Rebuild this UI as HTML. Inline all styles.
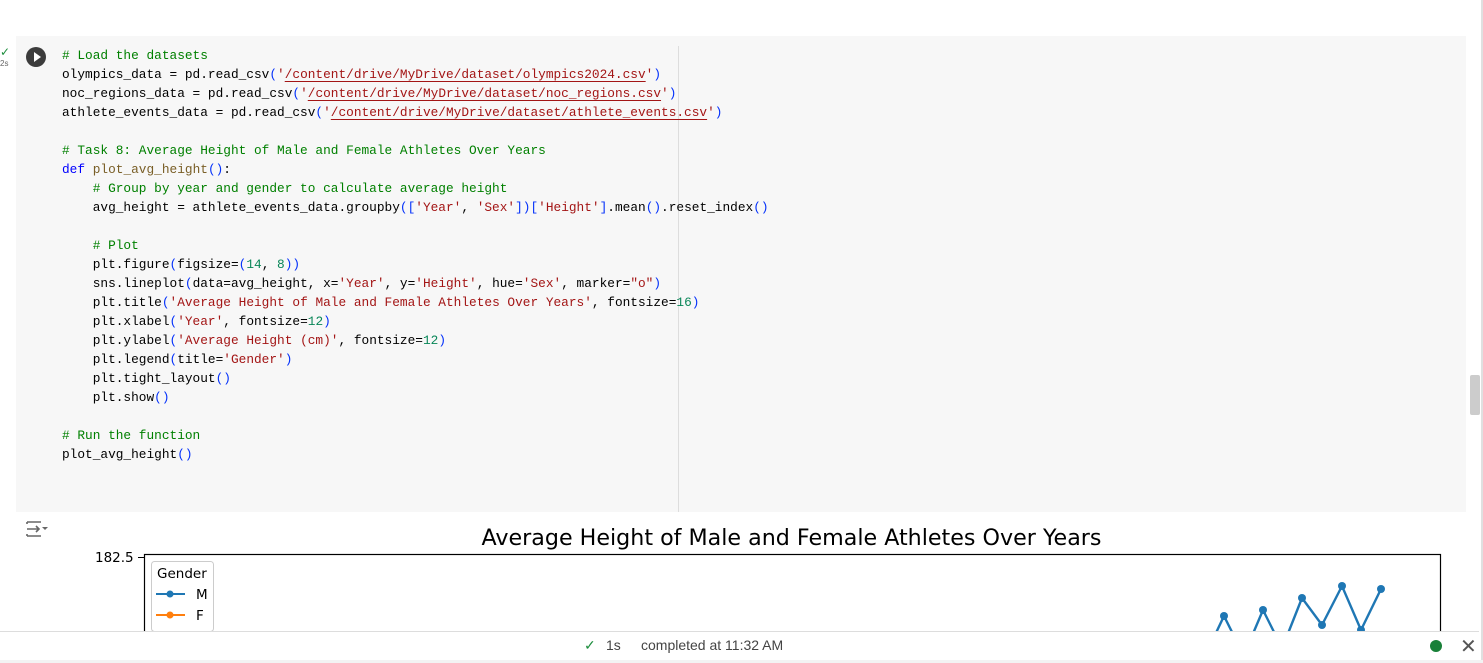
<!DOCTYPE html>
<html><head><meta charset="utf-8"><style>
body{margin:0;width:1483px;height:663px;overflow:hidden;background:#fff;font-family:"Liberation Sans",sans-serif;position:relative}
.cell{position:absolute;left:16px;top:36px;width:1450px;height:476px;background:#f7f7f7}
.vl{position:absolute;left:678px;top:46px;width:1px;height:466px;background:#ddd}
pre{position:absolute;left:62px;top:46px;margin:0;font-family:"Liberation Mono",monospace;font-size:12.8px;line-height:19px;color:#000}
.c{color:#008000}.k{color:#0000ff}.f{color:#795e26}.s{color:#a31515}.n{color:#098658}.b{color:#0431fa}
.u{text-decoration:underline;text-decoration-color:#a31515;text-underline-offset:3px}
.run{position:absolute;left:26px;top:47px;width:20px;height:20px;border-radius:50%;background:#3c3c3c}
.run:after{content:"";position:absolute;left:8px;top:5px;border-left:7px solid #fff;border-top:5px solid transparent;border-bottom:5px solid transparent}
.sb{position:absolute;left:1470px;top:375px;width:10px;height:40px;background:#ccc;border-radius:2px}
.status{position:absolute;left:0;top:631px;width:1479px;height:28px;border-top:1px solid #ddd;border-bottom:1px solid #ddd;background:#fff;font-size:14px;color:#444;z-index:5}
.bot{position:absolute;left:0;top:660px;width:1483px;height:3px;background:#f3f3f3;z-index:5}
</style></head><body>
<div style="position:absolute;left:1481px;top:0;width:2px;height:663px;background:#e0e0e0"></div>
<div style="position:absolute;left:0;top:45px;color:#1e8e3e;font-size:12px">✓</div>
<div style="position:absolute;left:0;top:59px;color:#666;font-size:8px">2s</div>
<div class="cell"></div><div class="vl"></div>
<div class="run"></div>
<pre><span class="c"># Load the datasets</span>
olympics_data = pd.read_csv<span class="b">(</span><span class="s">'<span class="u">/content/drive/MyDrive/dataset/olympics2024.csv</span>'</span><span class="b">)</span>
noc_regions_data = pd.read_csv<span class="b">(</span><span class="s">'<span class="u">/content/drive/MyDrive/dataset/noc_regions.csv</span>'</span><span class="b">)</span>
athlete_events_data = pd.read_csv<span class="b">(</span><span class="s">'<span class="u">/content/drive/MyDrive/dataset/athlete_events.csv</span>'</span><span class="b">)</span>

<span class="c"># Task 8: Average Height of Male and Female Athletes Over Years</span>
<span class="k">def</span> <span class="f">plot_avg_height</span><span class="b">()</span>:
    <span class="c"># Group by year and gender to calculate average height</span>
    avg_height = athlete_events_data.groupby<span class="b">([</span><span class="s">'Year'</span>, <span class="s">'Sex'</span><span class="b">])[</span><span class="s">'Height'</span><span class="b">]</span>.mean<span class="b">()</span>.reset_index<span class="b">()</span>

    <span class="c"># Plot</span>
    plt.figure<span class="b">(</span>figsize=<span class="b">(</span><span class="n">14</span>, <span class="n">8</span><span class="b">))</span>
    sns.lineplot<span class="b">(</span>data=avg_height, x=<span class="s">'Year'</span>, y=<span class="s">'Height'</span>, hue=<span class="s">'Sex'</span>, marker=<span class="s">"o"</span><span class="b">)</span>
    plt.title<span class="b">(</span><span class="s">'Average Height of Male and Female Athletes Over Years'</span>, fontsize=<span class="n">16</span><span class="b">)</span>
    plt.xlabel<span class="b">(</span><span class="s">'Year'</span>, fontsize=<span class="n">12</span><span class="b">)</span>
    plt.ylabel<span class="b">(</span><span class="s">'Average Height (cm)'</span>, fontsize=<span class="n">12</span><span class="b">)</span>
    plt.legend<span class="b">(</span>title=<span class="s">'Gender'</span><span class="b">)</span>
    plt.tight_layout<span class="b">()</span>
    plt.show<span class="b">()</span>

<span class="c"># Run the function</span>
plot_avg_height<span class="b">()</span></pre>
<div class="sb"></div>
<svg style="position:absolute;left:24px;top:519px" width="26" height="20" viewBox="0 0 26 20"><g stroke="#666" stroke-width="1.6" fill="none"><path d="M3 3H17M3 17H17M3 3V5M3 17V15M3 10H15M12 7l3 3-3 3"/></g><path d="M18 8h6l-3 3z" fill="#666"/></svg>
<div style="position:absolute;left:0;top:525px;width:1583px;text-align:center;font-family:'DejaVu Sans',sans-serif;font-size:22.2px;color:#000;white-space:nowrap">Average Height of Male and Female Athletes Over Years</div>
<div style="position:absolute;left:95px;top:550px;font-family:'DejaVu Sans',sans-serif;font-size:13.5px">182.5</div>
<div style="position:absolute;left:138px;top:557px;width:6px;height:1px;background:#000"></div>
<svg style="position:absolute;left:0;top:0" width="1483" height="663">
<rect x="144.5" y="554.5" width="1296" height="120" fill="none" stroke="#000" stroke-width="1.2"/>
<rect x="151.5" y="561.5" width="62" height="70" rx="3" fill="#fff" stroke="#ccc"/>
<text x="157" y="578" font-family="DejaVu Sans" font-size="13.5">Gender</text>
<line x1="156" y1="594" x2="185" y2="594" stroke="#1f77b4" stroke-width="2"/><circle cx="170" cy="594" r="3.5" fill="#1f77b4"/>
<text x="196" y="599" font-family="DejaVu Sans" font-size="13.5">M</text>
<line x1="156" y1="615" x2="185" y2="615" stroke="#ff7f0e" stroke-width="2"/><circle cx="170" cy="615" r="3.5" fill="#ff7f0e"/>
<text x="196" y="620" font-family="DejaVu Sans" font-size="13.5">F</text>
<polyline points="1215,635 1224,616 1234,636 1252,636 1263,610 1275,634 1287,636 1302,598 1322,625 1342,586 1361,630 1381,589" fill="none" stroke="#1f77b4" stroke-width="2.4"/>
<g fill="#1f77b4"><circle cx="1224" cy="616" r="4"/><circle cx="1263" cy="610" r="4"/><circle cx="1302" cy="598" r="4"/><circle cx="1322" cy="625" r="4"/><circle cx="1342" cy="586" r="4"/><circle cx="1361" cy="630" r="4"/><circle cx="1381" cy="589" r="4"/></g>
</svg>
<div class="status">
<span style="position:absolute;left:584px;top:5px;color:#1e8e3e">✓</span>
<span style="position:absolute;left:606px;top:5px">1s</span>
<span style="position:absolute;left:641px;top:5px">completed at 11:32 AM</span>
<span style="position:absolute;left:1430px;top:8px;width:12px;height:12px;border-radius:50%;background:#188038"></span>
<span style="position:absolute;left:1460px;top:2px;font-size:20px;color:#555">✕</span>
</div>
<div class="bot"></div>
</body></html>
